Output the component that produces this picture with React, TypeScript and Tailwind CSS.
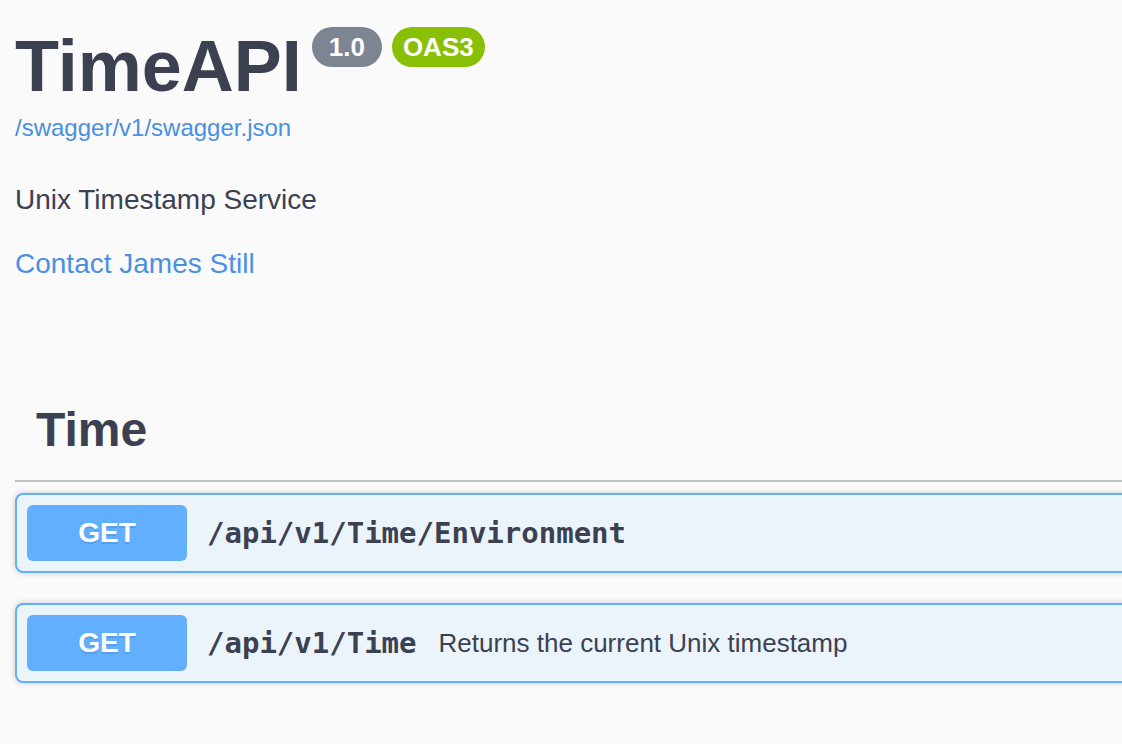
import React from "react";

function Op({ path, desc }: { path: string; desc?: string }) {
  return (
    <div className="flex h-[80px] items-center rounded-[8px] border-2 border-[#61affe] bg-[#ebf3fb] px-[10px] shadow-[0_0_6px_rgba(0,0,0,0.19)]">
      <div className="flex h-[56px] w-[160px] shrink-0 items-center justify-center rounded-[6px] bg-[#61affe] text-[28px] font-bold text-white [text-shadow:0_2px_0_rgba(0,0,0,0.1)]">
        GET
      </div>
      <div className="ml-[20px] mt-[2px] font-['DejaVu_Sans_Mono',monospace] text-[29px] font-bold text-[#3b4151]">
        {path}
      </div>
      {desc && (
        <div className="ml-[22px] text-[26px] text-[#3b4151]">{desc}</div>
      )}
    </div>
  );
}

export default function App() {
  return (
    <div className="min-h-screen w-full overflow-hidden bg-[#fafafa] font-['Liberation_Sans',Arial,sans-serif]">
      <div className="w-[1260px] pl-[15px]">
        <div className="flex items-start pt-[27px]">
          <h1 className="mt-[3px] text-[72px] font-bold leading-[72px] text-[#3b4151]">
            TimeAPI
          </h1>
          <span className="ml-[10px] flex h-[40px] w-[70px] items-center justify-center rounded-full bg-[#7d8492] text-[26px] font-bold text-white">
            1.0
          </span>
          <span className="ml-[10px] flex h-[40px] w-[93px] items-center justify-center rounded-full bg-[#89bf04] text-[26px] font-bold text-white">
            OAS3
          </span>
        </div>
        <div className="mt-[12px] text-[24px] leading-[28px] text-[#4990e2]">
          /swagger/v1/swagger.json
        </div>
        <div className="mt-[42px] text-[28px] leading-[32px] text-[#3b4151]">
          Unix Timestamp Service
        </div>
        <div className="mt-[32px] text-[28px] leading-[32px] text-[#4990e2]">
          Contact James Still
        </div>
        <div className="mt-[112px] border-b-2 border-[rgba(59,65,81,0.3)] pb-[22px] pl-[21px] pt-[10px]">
          <h2 className="text-[48px] font-bold leading-[56px] text-[#3b4151]">
            Time
          </h2>
        </div>
        <div className="mt-[11px]">
          <Op path="/api/v1/Time/Environment" />
        </div>
        <div className="mt-[30px]">
          <Op path="/api/v1/Time" desc="Returns the current Unix timestamp" />
        </div>
      </div>
    </div>
  );
}
